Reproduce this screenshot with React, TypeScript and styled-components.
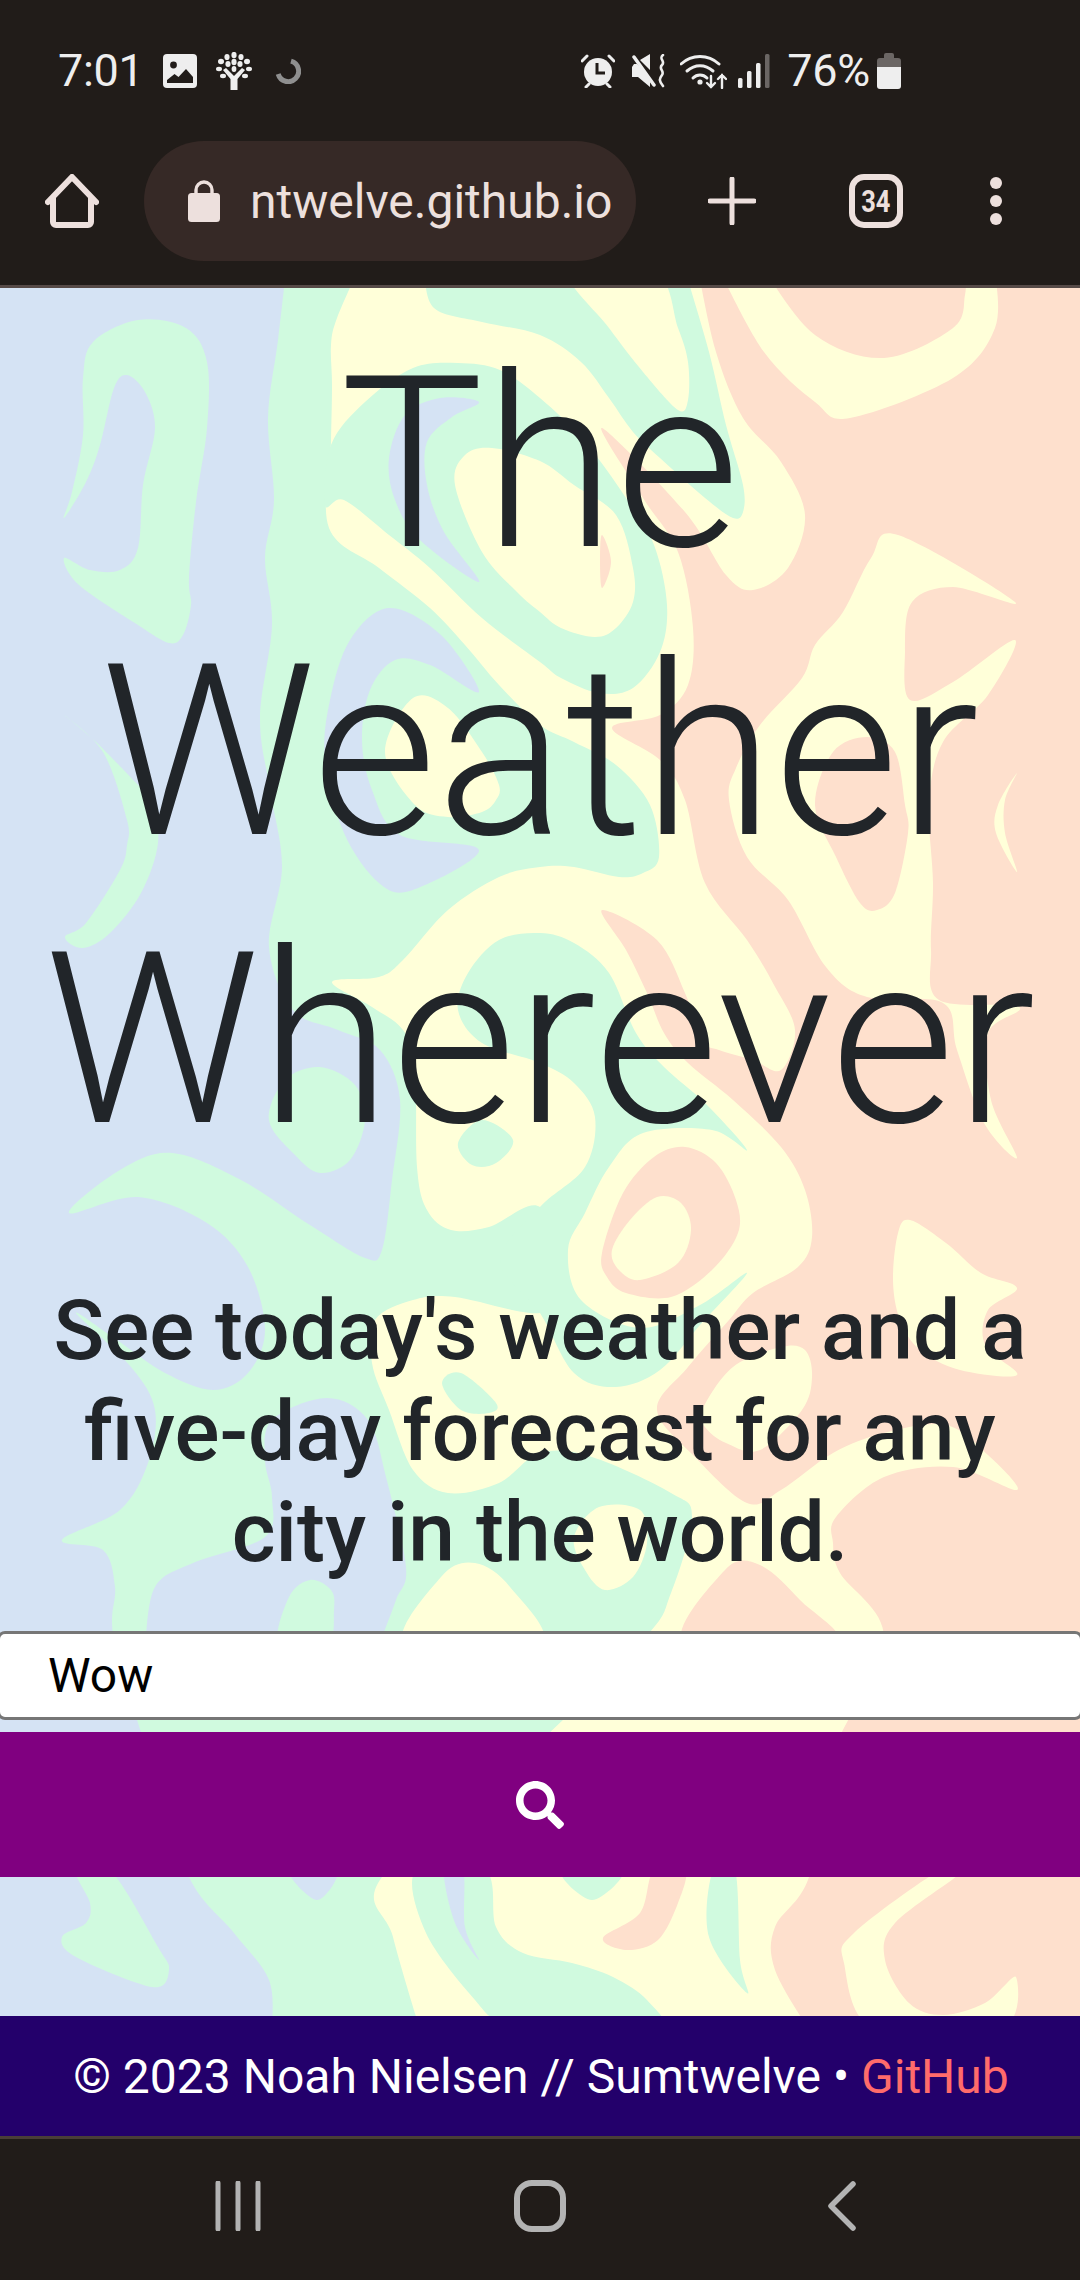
import React, { FunctionComponent } from 'react';
import styled, { createGlobalStyle } from 'styled-components';
import { FaSearch } from 'react-icons/fa';

type Point = [number, number];

interface Blob {
    fill: string;
    points: Point[];
}

const BLUE = '#d5e3f4';
const GREEN = '#d0fadf';
const YELLOW = '#ffffd9';
const PEACH = '#fee0cd';

const far = (a: Point, b: Point) => Math.hypot(a[0] - b[0], a[1] - b[1]) > 200;

// closed catmull-rom curve through the points, long runs stay straight so they don't bulge
const smooth = (pts: Point[]): string => {
    const n = pts.length;
    let d = `M${pts[0][0]} ${pts[0][1]}`;
    for (let i = 0; i < n; i++) {
        const p1 = pts[i];
        const p2 = pts[(i + 1) % n];
        if (far(p1, p2)) {
            d += `L${p2[0]} ${p2[1]}`;
            continue;
        }
        const prev = pts[(i - 1 + n) % n];
        const next = pts[(i + 2) % n];
        const p0 = far(prev, p1) ? p1 : prev;
        const p3 = far(next, p2) ? p2 : next;
        const c1x = p1[0] + (p2[0] - p0[0]) / 6;
        const c1y = p1[1] + (p2[1] - p0[1]) / 6;
        const c2x = p2[0] - (p3[0] - p1[0]) / 6;
        const c2y = p2[1] - (p3[1] - p1[1]) / 6;
        d += `C${c1x.toFixed(1)} ${c1y.toFixed(1)} ${c2x.toFixed(1)} ${c2y.toFixed(1)} ${p2[0]} ${p2[1]}`;
    }
    return d + 'Z';
};

const marble: Blob[] = [
    // green field
    { fill: GREEN, points: [[286, 270], [278, 340], [268, 418], [274, 500], [265, 558], [272, 625], [260, 718], [270, 790], [282, 867], [269, 947], [293, 1010], [338, 1030], [380, 1050], [400, 1100], [392, 1180], [382, 1250], [365, 1258], [310, 1225], [241, 1180], [172, 1153], [120, 1170], [69, 1213], [138, 1197], [207, 1223], [248, 1267], [265, 1330], [248, 1373], [213, 1390], [165, 1373], [117, 1340], [76, 1313], [131, 1367], [155, 1410], [148, 1463], [120, 1510], [62, 1540], [103, 1550], [115, 1587], [114, 1640], [150, 1760], [189, 1877], [234, 1933], [269, 1980], [272, 2030], [1100, 2030], [1100, 270]] },
    { fill: BLUE, points: [[145, 1645], [155, 1587], [193, 1563], [265, 1537], [272, 1497], [265, 1460], [272, 1420], [327, 1398], [368, 1420], [386, 1477], [406, 1567], [396, 1600], [379, 1645]] },
    { fill: GREEN, points: [[279, 1645], [289, 1597], [310, 1580], [331, 1590], [334, 1610], [327, 1645]] },
    // green hook, top left
    { fill: GREEN, points: [[64, 518], [72, 492], [83, 435], [83, 378], [93, 342], [138, 320], [186, 328], [207, 362], [207, 428], [196, 502], [189, 578], [191, 605], [183, 635], [169, 643], [138, 625], [79, 585], [64, 558], [90, 570], [120, 570], [138, 548], [143, 485], [155, 428], [145, 392], [127, 375], [114, 388], [100, 445], [86, 482]] },
    { fill: GREEN, points: [[64, 715], [103, 752], [127, 820], [127, 845], [120, 870], [86, 923], [65, 937], [83, 948], [110, 933], [141, 893], [158, 843], [152, 800], [138, 785], [96, 742]] },
    { fill: GREEN, points: [[269, 1120], [285, 1080], [320, 1067], [355, 1085], [365, 1120], [350, 1160], [320, 1173], [295, 1155]] },
    { fill: GREEN, points: [[76, 1870], [90, 1903], [86, 1923], [62, 1937], [76, 1957], [152, 1987], [169, 1970], [158, 1947], [110, 1870]] },
    { fill: BLUE, points: [[289, 1870], [317, 1900], [337, 1870]] },
    // blue under "ea"
    { fill: BLUE, points: [[389, 608], [441, 635], [479, 692], [430, 665], [395, 660], [370, 690], [362, 740], [372, 790], [400, 835], [479, 850], [413, 890], [379, 883], [344, 833], [325, 760], [330, 700], [350, 640]] },
    { fill: YELLOW, points: [[385, 752], [413, 698], [448, 708], [482, 752], [499, 785], [496, 800], [482, 812], [448, 817], [415, 805]] },
    // yellow main
    { fill: YELLOW, points: [[358, 270], [337, 318], [331, 345], [332, 385], [331, 442], [329, 528], [379, 568], [430, 608], [465, 645], [499, 685], [540, 725], [574, 742], [616, 765], [650, 805], [659, 857], [643, 873], [619, 877], [574, 867], [540, 867], [499, 877], [448, 910], [403, 960], [379, 977], [332, 982], [372, 1007], [403, 1030], [415, 1067], [417, 1167], [427, 1210], [451, 1230], [489, 1227], [540, 1207], [560, 1280], [540, 1313], [455, 1297], [413, 1300], [375, 1320], [372, 1363], [389, 1410], [413, 1470], [448, 1493], [499, 1483], [540, 1453], [592, 1457], [671, 1493], [692, 1517], [671, 1593], [643, 1640], [520, 1760], [382, 1877], [393, 1937], [420, 2030], [1100, 2030], [1100, 270]] },
    // green band, top
    { fill: GREEN, points: [[424, 270], [434, 308], [482, 322], [540, 335], [581, 362], [609, 398], [633, 432], [660, 458], [705, 498], [733, 518], [743, 512], [743, 485], [726, 425], [709, 352], [685, 270]] },
    { fill: YELLOW, points: [[568, 270], [609, 328], [643, 372], [678, 410], [688, 400], [688, 362], [678, 328], [654, 270]] },
    // green ring round the middle blob
    { fill: GREEN, points: [[331, 445], [365, 402], [413, 368], [458, 363], [500, 370], [540, 398], [585, 442], [626, 498], [654, 545], [667, 605], [660, 652], [633, 688], [599, 693], [561, 678], [540, 662], [482, 618], [430, 568], [389, 535], [344, 500], [325, 505]] },
    { fill: BLUE, points: [[479, 402], [440, 398], [405, 415], [389, 458], [395, 500], [420, 540], [479, 582], [444, 532], [427, 485], [427, 442], [452, 417]] },
    { fill: YELLOW, points: [[455, 485], [465, 455], [492, 448], [540, 461], [574, 485], [616, 515], [633, 568], [633, 602], [616, 628], [595, 637], [561, 628], [540, 612], [517, 592], [482, 552]] },
    { fill: PEACH, points: [[602, 535], [611, 562], [602, 588], [600, 560]] },
    // green patch under "Wherever"
    { fill: GREEN, points: [[540, 933], [574, 943], [609, 973], [636, 1033], [664, 1067], [705, 1103], [747, 1150], [712, 1130], [643, 1133], [609, 1167], [585, 1213], [568, 1250], [581, 1300], [640, 1328], [700, 1305], [747, 1273], [700, 1325], [660, 1370], [616, 1387], [574, 1373], [540, 1313], [500, 1260], [540, 1207], [585, 1167], [595, 1117], [574, 1083], [540, 1063], [482, 1043], [458, 1010], [468, 973], [499, 940]] },
    { fill: GREEN, points: [[458, 1143], [482, 1120], [513, 1140], [496, 1163], [472, 1165]] },
    { fill: GREEN, points: [[442, 1383], [461, 1373], [496, 1403], [489, 1413], [461, 1410]] },
    { fill: YELLOW, points: [[599, 1507], [640, 1510], [647, 1543], [633, 1577], [605, 1590], [585, 1570], [574, 1537]] },
    { fill: YELLOW, points: [[406, 1645], [441, 1577], [475, 1563], [510, 1587], [540, 1645]] },
    // below the button
    { fill: GREEN, points: [[416, 1870], [426, 1933], [475, 2000], [501, 2020], [565, 2020], [661, 2030], [647, 2000], [613, 1977], [572, 1963], [523, 1953], [496, 1927], [485, 1870]] },
    { fill: BLUE, points: [[444, 1870], [455, 1923], [479, 1960], [465, 1927], [463, 1870]] },
    { fill: GREEN, points: [[561, 1870], [592, 1900], [623, 1870]] },
    { fill: PEACH, points: [[654, 1870], [640, 1913], [603, 1938], [627, 1950], [658, 1940], [678, 1903], [685, 1870]] },
    { fill: GREEN, points: [[713, 1870], [709, 1937], [747, 1993], [740, 1960], [735, 1870]] },
    // peach main
    { fill: PEACH, points: [[698, 270], [716, 352], [743, 418], [781, 462], [805, 515], [788, 568], [753, 590], [726, 575], [685, 512], [602, 428], [643, 498], [678, 552], [693, 628], [688, 685], [660, 715], [612, 728], [660, 760], [685, 800], [705, 883], [747, 940], [774, 985], [795, 1030], [781, 1070], [753, 1060], [719, 1050], [702, 1040], [685, 993], [657, 940], [602, 910], [626, 950], [647, 993], [664, 1033], [688, 1063], [733, 1100], [781, 1147], [805, 1190], [812, 1237], [798, 1267], [753, 1293], [729, 1320], [688, 1367], [657, 1410], [695, 1457], [747, 1503], [781, 1490], [833, 1453], [884, 1433], [946, 1425], [988, 1455], [1017, 1490], [953, 1467], [884, 1477], [836, 1517], [833, 1543], [840, 1573], [884, 1640], [830, 1760], [809, 1877], [775, 1927], [775, 1970], [809, 2030], [1100, 2030], [1100, 270]] },
    { fill: YELLOW, points: [[719, 270], [764, 352], [815, 402], [850, 418], [953, 378], [995, 328], [995, 270]] },
    { fill: PEACH, points: [[764, 270], [815, 335], [884, 358], [953, 328], [965, 295], [965, 270]] },
    { fill: YELLOW, points: [[898, 535], [1015, 602], [953, 587], [912, 602], [905, 652], [910, 700], [953, 682], [1015, 640], [988, 695], [943, 742], [929, 802], [933, 883], [931, 950], [939, 1000], [1019, 1007], [988, 1033], [991, 1100], [1017, 1158], [984, 1123], [957, 1050], [943, 1003], [867, 997], [826, 967], [788, 900], [747, 857], [729, 800], [736, 768], [760, 725], [802, 678], [815, 645], [843, 612], [871, 558]] },
    { fill: PEACH, points: [[815, 805], [833, 752], [867, 737], [895, 752], [905, 805], [908, 833], [895, 893], [877, 910], [860, 903], [836, 857]] },
    { fill: YELLOW, points: [[1017, 773], [998, 805], [996, 833], [1017, 872], [1005, 833], [1005, 800]] },
    { fill: PEACH, points: [[602, 1253], [623, 1193], [654, 1157], [685, 1147], [716, 1163], [736, 1200], [738, 1233], [712, 1270], [671, 1297], [626, 1293], [607, 1277]] },
    { fill: YELLOW, points: [[612, 1250], [630, 1220], [657, 1197], [681, 1203], [691, 1230], [678, 1263], [640, 1280], [619, 1270]] },
    { fill: YELLOW, points: [[702, 1410], [733, 1367], [781, 1347], [805, 1350], [812, 1377], [802, 1410], [760, 1450], [726, 1443], [705, 1427]] },
    { fill: YELLOW, points: [[898, 1233], [910, 1220], [946, 1243], [981, 1273], [1017, 1288], [988, 1310], [985, 1345], [1017, 1375], [960, 1370], [920, 1350], [900, 1320], [893, 1280]] },
    { fill: PEACH, points: [[685, 1645], [725, 1570], [760, 1565], [800, 1600], [835, 1645]] },
    { fill: YELLOW, points: [[940, 1870], [854, 1933], [844, 1963], [875, 2030], [1000, 2030], [1016, 1977], [985, 2003], [943, 2015], [909, 2003], [885, 1960], [895, 1923], [964, 1870]] }
];

const GlobalStyle = createGlobalStyle`
    html, body {
        margin: 0;
        padding: 0;
        background-color: #211c19;
    }
    * {
        box-sizing: border-box;
    }
`;

const Screen = styled.div`
    display: flex;
    flex-direction: column;
    width: 1080px;
    height: 2280px;
    overflow: hidden;
    font-family: Roboto, "Liberation Sans", sans-serif;
`;

const StatusBar = styled.div`
    display: flex;
    align-items: center;
    justify-content: space-between;
    height: 141px;
    padding: 0 179px 0 58px;
    background-color: #211c19;
    color: #eeeeee;
    font-size: 45px;
    line-height: 1;
`;

const StatusGroup = styled.div`
    display: flex;
    align-items: center;
`;

const StatusText = styled.span<{ $gap: number }>`
    margin-right: ${(p) => p.$gap}px;
    letter-spacing: -0.3px;
`;

const StatusIcon = styled.svg<{ $gap?: number }>`
    display: block;
    margin-right: ${(p) => p.$gap ?? 0}px;
    flex: none;
`;

const Toolbar = styled.div`
    display: flex;
    align-items: center;
    height: 147px;
    padding: 0 0 24px 45px;
    background-color: #211c19;
    border-bottom: 3px solid #564a47;
    color: #ede0dd;
`;

const AddressPill = styled.div`
    display: flex;
    align-items: center;
    flex: none;
    width: 492px;
    height: 120px;
    margin: 0 72px 0 45px;
    padding-left: 44px;
    border-radius: 60px;
    background-color: #362926;
    font-size: 48px;
`;

const AddressText = styled.span`
    margin-left: 30px;
    white-space: nowrap;
`;

const TabCount = styled.div`
    display: flex;
    align-items: center;
    justify-content: center;
    flex: none;
    width: 54px;
    height: 54px;
    margin: 0 87px 0 93px;
    border: 6px solid #ede0dd;
    border-radius: 15px;
    font-size: 31px;
    font-weight: 700;
    > span {
        transform: scaleX(0.82);
    }
`;

const Main = styled.main`
    position: relative;
    flex: 1;
    min-height: 0;
    background-color: ${BLUE};
`;

const Backdrop = styled.svg`
    position: absolute;
    left: 0;
    top: 0;
    display: block;
    width: 100%;
    height: 100%;
`;

const Content = styled.div`
    position: relative;
    display: flex;
    flex-direction: column;
    text-align: center;
    color: #212529;
`;

const Title = styled.h1`
    margin: 32px 0 97px;
    padding: 0 36px;
    font-size: 240px;
    font-weight: 300;
    line-height: 1.2;
`;

const Subtitle = styled.h3`
    margin: 0 0 48px;
    padding: 0 48px;
    font-size: 84px;
    font-weight: 500;
    line-height: 1.2;
`;

const SearchInput = styled.input`
    display: block;
    flex: none;
    width: 1086px;
    height: 89px;
    margin: 0 0 12px -3px;
    padding: 0 48px;
    border: 3px solid #767676;
    border-radius: 8px;
    background-color: #ffffff;
    color: #000000;
    font-family: Roboto, "Liberation Sans", sans-serif;
    font-size: 48px;
    outline: none;
`;

const SearchButton = styled.button`
    display: flex;
    align-items: center;
    justify-content: center;
    width: 100%;
    height: 145px;
    padding: 0;
    border: none;
    background-color: #800080;
    color: #ffffff;
    font-size: 48px;
`;

const Footer = styled.footer`
    display: flex;
    align-items: center;
    justify-content: center;
    height: 120px;
    padding-left: 2px;
    background-color: #23006b;
    color: #ffffff;
    font-size: 48px;
    white-space: pre;
`;

const FooterLink = styled.a`
    color: #ff6b6b;
    text-decoration: none;
`;

const NavBar = styled.div`
    display: grid;
    grid-template-columns: repeat(3, 302px);
    align-items: center;
    justify-items: center;
    height: 144px;
    padding: 0 87px 7px;
    border-top: 3px solid #4a3e38;
    background-color: #211c19;
`;

const ImageIcon = () => (
    <StatusIcon width="34" height="34" viewBox="0 0 34 34" $gap={19}>
        <rect x="0" y="0" width="34" height="34" rx="4" fill="#eeeeee" />
        <circle cx="10.5" cy="11" r="3.4" fill="#211c19" />
        <path d="M4 29v-3l7.5-6 4 3L23 15l7 8v6z" fill="#211c19" />
    </StatusIcon>
);

const TreeIcon = () => (
    <StatusIcon width="36" height="38" viewBox="0 0 36 38" $gap={23} fill="#eeeeee">
        <path d="M14.5 38V27L7 18l3-2 8 8 8-8 3 2-7.5 9v11z" />
        <ellipse cx="18" cy="3" rx="2.6" ry="3.2" />
        <ellipse cx="11" cy="5" rx="2.6" ry="3.1" />
        <ellipse cx="25" cy="5" rx="2.6" ry="3.1" />
        <ellipse cx="5" cy="9.5" rx="3" ry="2.7" />
        <ellipse cx="31" cy="9.5" rx="3" ry="2.7" />
        <ellipse cx="18" cy="10" rx="2.6" ry="3.2" />
        <ellipse cx="12" cy="12" rx="2.6" ry="3" />
        <ellipse cx="24" cy="12" rx="2.6" ry="3" />
        <ellipse cx="18" cy="17" rx="2.4" ry="3" />
        <ellipse cx="3" cy="17" rx="3" ry="2.2" />
        <ellipse cx="33" cy="17" rx="3" ry="2.2" />
        <ellipse cx="7" cy="24" rx="3" ry="2.2" />
        <ellipse cx="29" cy="24" rx="3" ry="2.2" />
    </StatusIcon>
);

const SpinnerIcon = () => (
    <StatusIcon width="26" height="26" viewBox="0 0 26 26">
        <path d="M16 3.2A10.4 10.4 0 1 1 3.2 16" fill="none" stroke="#8f8f8f" strokeWidth="5" />
    </StatusIcon>
);

const AlarmIcon = () => (
    <StatusIcon width="34" height="34" viewBox="0 0 34 34" $gap={17}>
        <circle cx="17" cy="18" r="14" fill="#eeeeee" />
        <path d="M16 9v10h8" fill="none" stroke="#211c19" strokeWidth="3" />
        <path d="M1 7l5-5M33 7l-5-5M5 33l3-3M29 33l-3-3" stroke="#eeeeee" strokeWidth="3" strokeLinecap="round" />
    </StatusIcon>
);

const MuteIcon = () => (
    <StatusIcon width="34" height="34" viewBox="0 0 34 34" $gap={14}>
        <path d="M0 13v10h6l12 10v-9L5 10H2zM8 6l10 10V0z" fill="#eeeeee" />
        <path d="M2 3l20 28" stroke="#eeeeee" strokeWidth="3.5" strokeLinecap="round" />
        <path d="M31 1c-5 4 3 6-1 10s3 6 0 10-3 6 1 11" fill="none" stroke="#eeeeee" strokeWidth="2.6" strokeLinecap="round" />
    </StatusIcon>
);

const WifiIcon = () => (
    <StatusIcon width="47" height="36" viewBox="0 0 47 36" $gap={11}>
        <g fill="none" stroke="#eeeeee" strokeWidth="3" strokeLinecap="round">
            <path d="M1 11c11-10 27-10 38 0" />
            <path d="M7 18c8-7 18-7 26 0" />
            <path d="M13 25c4-4 10-4 14 0" />
            <path d="M31 23v11M27 30l4 4 4-4" strokeWidth="2.4" />
            <path d="M42 35V22M38 26l4-4 4 4" strokeWidth="2.4" />
        </g>
        <circle cx="20" cy="29" r="2.6" fill="#eeeeee" />
    </StatusIcon>
);

const SignalIcon = () => (
    <StatusIcon width="32" height="34" viewBox="0 0 32 34" $gap={17}>
        <rect x="0" y="24" width="4.5" height="10" rx="1.5" fill="#eeeeee" />
        <rect x="9" y="17" width="4.5" height="17" rx="1.5" fill="#eeeeee" />
        <rect x="18" y="9" width="4.5" height="25" rx="1.5" fill="#eeeeee" />
        <rect x="27" y="0" width="4.5" height="34" rx="1.5" fill="#6b6664" />
    </StatusIcon>
);

const BatteryIcon = () => (
    <StatusIcon width="24" height="36" viewBox="0 0 24 36">
        <path d="M7 2a2 2 0 0 1 2-2h6a2 2 0 0 1 2 2v3h4a3 3 0 0 1 3 3v6H0V8a3 3 0 0 1 3-3h4z" fill="#6b6664" />
        <path d="M0 14h24v19a3 3 0 0 1-3 3H3a3 3 0 0 1-3-3z" fill="#eeeeee" />
    </StatusIcon>
);

const HomeIcon = () => (
    <StatusIcon width="54" height="54" viewBox="0 0 54 54">
        <path d="M3 28L27 3l24 25" fill="none" stroke="#ede0dd" strokeWidth="6" strokeLinecap="round" strokeLinejoin="round" />
        <path d="M8 23v25a3 3 0 0 0 3 3h32a3 3 0 0 0 3-3V23" fill="none" stroke="#ede0dd" strokeWidth="6" strokeLinejoin="round" />
    </StatusIcon>
);

const LockIcon = () => (
    <StatusIcon width="32" height="42" viewBox="0 0 32 42">
        <path d="M8 17V10a8 8 0 0 1 16 0v7" fill="none" stroke="#ede0dd" strokeWidth="3.4" />
        <rect x="0" y="13" width="32" height="29" rx="3.5" fill="#ede0dd" />
    </StatusIcon>
);

const PlusIcon = () => (
    <StatusIcon width="48" height="48" viewBox="0 0 48 48">
        <path d="M24 2v44M2 24h44" stroke="#ede0dd" strokeWidth="5" strokeLinecap="round" />
    </StatusIcon>
);

const MenuIcon = () => (
    <StatusIcon width="12" height="48" viewBox="0 0 12 48" fill="#ede0dd">
        <circle cx="6" cy="6" r="6" />
        <circle cx="6" cy="24" r="6" />
        <circle cx="6" cy="42" r="6" />
    </StatusIcon>
);

const RecentsIcon = () => (
    <StatusIcon width="46" height="50" viewBox="0 0 46 50">
        <path d="M3 2v46M23 2v46M43 2v46" stroke="#b3b3b3" strokeWidth="5" strokeLinecap="round" />
    </StatusIcon>
);

const HomeNavIcon = () => (
    <StatusIcon width="52" height="52" viewBox="0 0 52 52">
        <rect x="3" y="3" width="46" height="46" rx="15" fill="none" stroke="#b3b3b3" strokeWidth="6" />
    </StatusIcon>
);

const BackIcon = () => (
    <StatusIcon width="30" height="50" viewBox="0 0 30 50">
        <path d="M26 3L4 25l22 22" fill="none" stroke="#b3b3b3" strokeWidth="5.5" strokeLinecap="round" strokeLinejoin="round" />
    </StatusIcon>
);

const App: FunctionComponent = () => {
    return (
        <Screen>
            <GlobalStyle />
            <StatusBar>
                <StatusGroup>
                    <StatusText $gap={19}>7:01</StatusText>
                    <ImageIcon />
                    <TreeIcon />
                    <SpinnerIcon />
                </StatusGroup>
                <StatusGroup>
                    <AlarmIcon />
                    <MuteIcon />
                    <WifiIcon />
                    <SignalIcon />
                    <StatusText $gap={7}>76%</StatusText>
                    <BatteryIcon />
                </StatusGroup>
            </StatusBar>
            <Toolbar>
                <HomeIcon />
                <AddressPill>
                    <LockIcon />
                    <AddressText>ntwelve.github.io</AddressText>
                </AddressPill>
                <PlusIcon />
                <TabCount><span>34</span></TabCount>
                <MenuIcon />
            </Toolbar>
            <Main>
                <Backdrop viewBox="0 288 1080 1728" preserveAspectRatio="none">
                    {marble.map((blob, i) => <path key={i} d={smooth(blob.points)} fill={blob.fill} />)}
                </Backdrop>
                <Content>
                    <Title>The Weather Wherever</Title>
                    <Subtitle>See today's weather and a five-day forecast for any city in the world.</Subtitle>
                    <SearchInput defaultValue="Wow" />
                    <SearchButton><FaSearch /></SearchButton>
                </Content>
            </Main>
            <Footer>
                © 2023 Noah Nielsen // Sumtwelve • <FooterLink href="#">GitHub</FooterLink>
            </Footer>
            <NavBar>
                <RecentsIcon />
                <HomeNavIcon />
                <BackIcon />
            </NavBar>
        </Screen>
    );
};

export default App;
